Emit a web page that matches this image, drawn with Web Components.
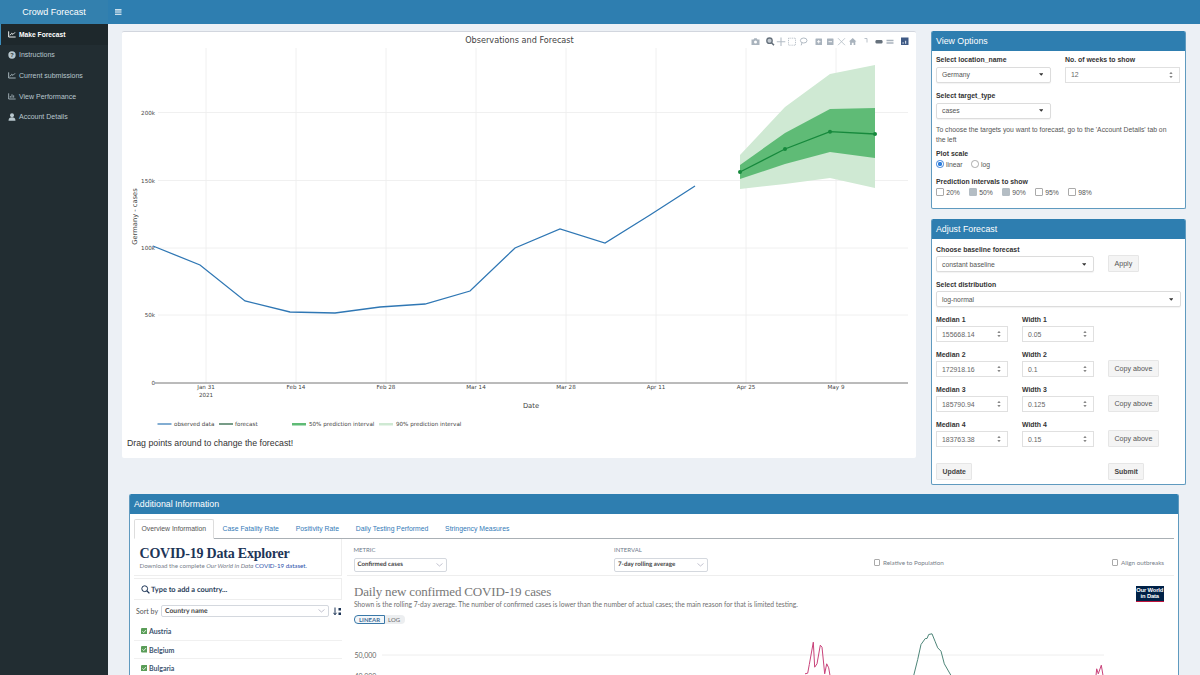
<!DOCTYPE html>
<html lang="en"><head><meta charset="utf-8"><title>Crowd Forecast</title>
<style>
html,body{margin:0;height:675px;overflow:hidden;background:#ecf0f5;font-family:"Liberation Sans",Arial,sans-serif;color:#333}
</style></head><body>
<cf-app></cf-app>
<script>
function el(name, html, css){
  customElements.define(name, class extends HTMLElement{
    constructor(){super();const r=this.attachShadow({mode:'open'});r.innerHTML='<style>'+css+'</style>'+html;}
  });
}
const caret='<svg width="4.500" height="3" viewBox="0 0 7 4"><path d="M0 0h7L3.500 4z" fill="#333"/></svg>';
const spin='<svg width="4" height="8" viewBox="0 0 6 12"><path d="M3 1 5.500 4.500H.5zM3 11 .5 7.500h5z" fill="#888"/></svg>';

el('cf-nav-item',`<slot name="icon"></slot><span><slot></slot></span>`,
`:host{display:flex;align-items:center;height:20.600px;padding-left:7px;gap:3px;font-size:7px;color:#b8c7ce;border-left:1px solid transparent}
:host([active]){background:#1e282c;color:#fff;font-weight:700;border-left-color:#3c8dbc;font-size:6.700px}
::slotted(svg){width:8px;height:8px;flex:none}`);

el('cf-header',`<div class="logo">Crowd Forecast</div><div class="bar"><svg width="6.500" height="6" viewBox="0 0 8 7" fill="#fff"><path d="M0 0h8v1.500H0zM0 2.750h8v1.500H0zM0 5.500h8V7H0z"/></svg></div>`,
`:host{display:flex;height:24px;flex:none}
.logo{width:108px;background:#3380ae;color:#fff;font-size:9px;display:flex;align-items:center;justify-content:center}
.bar{flex:1;background:#2e7eb0;display:flex;align-items:center;padding-left:7px}`);

el('cf-sidebar',`<nav>
<cf-nav-item active><svg slot="icon" viewBox="0 0 12 12" fill="none" stroke="#fff" stroke-width="1.400"><path d="M1 2v8.500h10.500M3 8l2.500-3 2 1.500L10.500 3.500"/></svg>Make Forecast</cf-nav-item>
<cf-nav-item><svg slot="icon" viewBox="0 0 12 12"><circle cx="6" cy="6" r="5.500" fill="#b8c7ce"/><text x="6" y="9" font-size="8.500" font-weight="700" text-anchor="middle" fill="#222d32" font-family="Liberation Sans">?</text></svg>Instructions</cf-nav-item>
<cf-nav-item><svg slot="icon" viewBox="0 0 12 12" fill="none" stroke="#b8c7ce" stroke-width="1.300"><path d="M1 2v8.500h10.500M3 8l2.500-3 2 1.500L10.500 3.500"/></svg>Current submissions</cf-nav-item>
<cf-nav-item><svg slot="icon" viewBox="0 0 12 12" fill="none" stroke="#b8c7ce" stroke-width="1.200"><path d="M1 2v8.500h10.500M3.500 8.500V6M6 8.500V3.500M8.500 8.500V5"/></svg>View Performance</cf-nav-item>
<cf-nav-item><svg slot="icon" viewBox="0 0 12 12" fill="#b8c7ce"><circle cx="6" cy="3.500" r="3"/><path d="M.8 11.500c0-3.800 2.200-5 5.200-5s5.200 1.200 5.200 5z"/></svg>Account Details</cf-nav-item>
</nav>`,`:host{display:block;width:108px;flex:none;background:#222d32}
nav{display:flex;flex-direction:column}`);

el('cf-box',`<header><slot name="title"></slot></header><div class="b"><slot></slot></div>`,
`:host{display:block;background:#fff;border:1px solid #5f9abf;border-top-width:0;border-radius:2px;box-sizing:border-box;overflow:hidden}
header{background:#2e7eb0;color:#fff;font-size:8.800px;height:19.500px;display:flex;align-items:center;margin:0 -1px;padding-left:5px}
.b{padding:5px 4px 0}`);

el('cf-select',`<span><slot></slot></span>${caret}`,
`:host{display:flex;align-items:center;justify-content:space-between;box-sizing:border-box;height:16px;padding:0 7px 0 5px;border:1px solid #dcdcdc;border-radius:2px;font-size:6.800px;color:#555;background:#fff;box-shadow:0 1px 1px rgba(0,0,0,.05)}`);

el('cf-num',`<span><slot></slot></span>${spin}`,
`:host{display:flex;align-items:center;justify-content:space-between;box-sizing:border-box;height:16px;padding:0 6px 0 5px;border:1px solid #e0e0e0;font-size:6.900px;color:#666;background:#fff}`);

el('cf-btn',`<slot></slot>`,
`:host{display:inline-flex;align-items:center;justify-content:center;box-sizing:border-box;height:17px;padding:0 5.500px;background:#f4f4f4;border:1px solid #e6e6e6;font-size:7.100px;color:#555;border-radius:1px;white-space:nowrap}
:host([b]){font-weight:700;color:#444;font-size:6.900px}`);

el('cf-field',`<label><slot name="label"></slot></label><slot></slot>`,
`:host{display:flex;flex-direction:column;gap:2.500px;min-width:0}
label{font-size:6.900px;font-weight:700;color:#333;line-height:9px;white-space:nowrap}`);

el('cf-check',`<i></i><span><slot></slot></span>`,
`:host{display:inline-flex;align-items:center;gap:2.700px;font-size:6.800px;color:#555;width:33px}
i{width:5.500px;height:5.500px;border:.5px solid #aaa;border-radius:1px;background:#fff;display:block;flex:none}
:host([on]) i{background:#b4bdc4;border-color:#b4bdc4}`);

el('cf-radio',`<i></i><span><slot></slot></span>`,
`:host{display:inline-flex;align-items:center;gap:2.500px;font-size:6.800px;color:#555;width:35px}
i{width:5.500px;height:5.500px;border:.5px solid #aaa;border-radius:50%;background:#fff;display:block;flex:none}
:host([on]) i{border:.5px solid #3a80d8;background:radial-gradient(circle,#2f7fdc 0 1.900px,#fff 2.400px)}`);

el('cf-view-options',`<cf-box><span slot="title">View Options</span>
<div class="v">
 <div class="two"><cf-field><span slot="label">Select location_name</span><cf-select>Germany</cf-select></cf-field>
 <cf-field><span slot="label">No. of weeks to show</span><cf-num>12</cf-num></cf-field></div>
 <cf-field class="half"><span slot="label">Select target_type</span><cf-select>cases</cf-select></cf-field>
 <div class="note">To choose the targets you want to forecast, go to the 'Account Details' tab on the left</div>
 <div class="grp g1"><b>Plot scale</b><div class="r"><cf-radio on>linear</cf-radio><cf-radio>log</cf-radio></div></div>
 <div class="grp g2"><b>Prediction intervals to show</b><div class="r"><cf-check>20%</cf-check><cf-check on>50%</cf-check><cf-check on>90%</cf-check><cf-check>95%</cf-check><cf-check>98%</cf-check></div></div>
</div></cf-box>`,
`:host{display:block}
cf-box{height:178px}
.v{display:flex;flex-direction:column;margin-top:-.5px}
.two{display:grid;grid-template-columns:115px 115px;column-gap:14px}
.half{width:115px;margin-top:8.500px}
.note{font-size:6.800px;line-height:9.500px;color:#555;margin-top:6.500px;max-width:240px}
.grp{display:flex;flex-direction:column;gap:1.500px;font-size:6.900px;line-height:9px}
.g1{margin-top:4.500px}.g2{margin-top:7.500px}
.r{display:flex;align-items:center;height:10px}`);

const rows=[['155668.14','0.05',0],['172918.16','0.1',1],['185790.94','0.125',1],['183763.38','0.15',1]];
el('cf-adjust',`<cf-box><span slot="title">Adjust Forecast</span>
<div class="v">
 <div class="a"><cf-field style="width:158px"><span slot="label">Choose baseline forecast</span><cf-select>constant baseline</cf-select></cf-field><cf-btn>Apply</cf-btn></div>
 <cf-field><span slot="label">Select distribution</span><cf-select>log-normal</cf-select></cf-field>
 ${rows.map((r,i)=>`<div class="g"><cf-field><span slot="label">Median ${i+1}</span><cf-num>${r[0]}</cf-num></cf-field><cf-field><span slot="label">Width ${i+1}</span><cf-num>${r[1]}</cf-num></cf-field>${r[2]?'<cf-btn>Copy above</cf-btn>':'<span></span>'}</div>`).join('')}
 <div class="u"><cf-btn b>Update</cf-btn><cf-btn b>Submit</cf-btn></div>
</div></cf-box>`,
`:host{display:block}
cf-box{height:266px}
.v{display:flex;flex-direction:column;gap:7.400px;padding-top:1px}
.a{display:flex;gap:14px;align-items:flex-end;margin-bottom:.6px}
.g{display:grid;grid-template-columns:72px 72px auto;column-gap:14px;align-items:end;justify-items:start}
.g cf-field{width:100%}
.u{display:grid;grid-template-columns:172px auto;margin-top:8.500px;justify-items:start}`);

const obs='153,246 200,265 245,301 290,312 335,313 380,307 425,304 470,291 515,248 560,229 605,243 650,215 695,186';
const vg=[206,296,386,476,566,656,746,836], hg=[[315,'50k'],[248,'100k'],[180.5,'150k'],[112.5,'200k']];
const dates=[[206,'Jan 31'],[296,'Feb 14'],[386,'Feb 28'],[476,'Mar 14'],[566,'Mar 28'],[656,'Apr 11'],[746,'Apr 25'],[836,'May 9']];
const mb=`<g fill="#a9b3bd" stroke="none">
<path d="M751.500 39.500h2l.8-1.300h2.400l.8 1.300h2v5.500h-8z"/><circle cx="755.500" cy="42" r="1.500" fill="#fff"/>
<circle cx="769.500" cy="40.700" r="2.700" fill="#c4cbd2" stroke="#66717c" stroke-width="1.300"/><path d="m771.500 42.800 2.500 2.500" stroke="#66717c" stroke-width="1.600"/>
<path d="M781 37.500v8.500M776.800 41.700h8.500" stroke="#b3bcc5" stroke-width="1.100"/>
<rect x="788.500" y="38.200" width="7" height="7" fill="none" stroke="#a9b3bd" stroke-width=".8" stroke-dasharray="1 .8"/>
<ellipse cx="803.700" cy="40.500" rx="3.300" ry="2.500" fill="none" stroke="#a9b3bd" stroke-width=".9"/><path d="m802 42.800-.8 2.500" stroke="#a9b3bd" stroke-width=".9"/>
<rect x="815.500" y="38.500" width="6.500" height="6.500" rx=".5"/><path d="M817 41.700h3.500M818.700 40v3.400" stroke="#fff" stroke-width=".9"/>
<rect x="827" y="38.500" width="6.500" height="6.500" rx=".5"/><path d="M828.500 41.700h3.500" stroke="#fff" stroke-width=".9"/>
<path d="m838 38.200 7 7M845 38.200l-7 7" stroke="#b3bcc5" stroke-width=".8"/>
<path d="m852.700 38 3.700 3.400h-1.100v3.600h-1.700v-2.300h-1.800V45h-1.700v-3.600h-1.100z"/>
<path d="M864.500 38.500h2.500v4" fill="none" stroke="#a9b3bd" stroke-width=".8"/>
<rect x="875.500" y="40" width="7" height="3.500" rx="1.200" fill="#66717c"/>
<path d="M886.500 39.800h7v1.500h-7zM886.500 42.300h7v1.500h-7z"/>
<rect x="901" y="37.500" width="7.500" height="7.500" fill="#3f5a85"/><path d="M902.500 43.700v-1.500h1.200v1.500zM905 43.700V40.700h1.200v3z" fill="#cdd8e6"/>
</g>`;
el('cf-plot',`<svg width="794" height="400" viewBox="122 31 794 400" font-family="DejaVu Sans,sans-serif">
 <text x="519.500" y="42.500" font-size="8.150" text-anchor="middle" fill="#444">Observations and Forecast</text>
 ${mb}
 <g stroke="#ececec" stroke-width=".8">${vg.map(x=>`<path d="M${x} 48V383"/>`).join('')}${hg.map(h=>`<path d="M158 ${h[0]}H908"/>`).join('')}</g>
 <path d="M155 383H908" stroke="#777" stroke-width="1"/>
 <polygon points="740,155 785,107 830,74 875,65 875,188 830,178 785,184 740,189" fill="#cfe9d3"/>
 <polygon points="740,165 785,133 830,109 875,108 875,158 830,152 785,164 740,179" fill="#5fbb76"/>
 <polyline points="740,172 785,149 830,131.700 875,134" fill="none" stroke="#16893c" stroke-width="1.300"/>
 <g fill="#16893c"><circle cx="740" cy="172" r="2"/><circle cx="785" cy="149" r="2"/><circle cx="830" cy="131.700" r="2"/><circle cx="875" cy="134" r="2"/></g>
 <polyline points="${obs}" fill="none" stroke="#2f77b4" stroke-width="1.300"/>
 <g font-size="5.600" fill="#444">
  ${hg.map(h=>`<text x="155" y="${h[0]+2}" text-anchor="end">${h[1]}</text>`).join('')}
  <text x="155" y="385" text-anchor="end">0</text>
  ${dates.map(d=>`<text x="${d[0]}" y="389.300" text-anchor="middle">${d[1]}</text>`).join('')}
  <text x="206" y="397" text-anchor="middle">2021</text>
  <text x="174" y="426">observed data</text><text x="235" y="426">forecast</text>
  <text x="309" y="426">50% prediction interval</text><text x="396" y="426">90% prediction interval</text>
 </g>
 <text x="531" y="407.500" font-size="6.800" text-anchor="middle" fill="#444">Date</text>
 <text transform="translate(137 216.500) rotate(-90)" font-size="6.700" text-anchor="middle" fill="#444">Germany - cases</text>
 <g stroke-width="1.200" fill="none"><path d="M157.500 424h14" stroke="#2f77b4"/><path d="M219 424h14" stroke="#1d5a37"/></g>
 <rect x="292" y="423" width="14" height="2.500" fill="#5fbb76"/><rect x="379" y="423" width="14" height="2.500" fill="#cfe9d3"/>
</svg><p>Drag points around to change the forecast!</p>`,
`:host{display:block;width:794px;height:427px;background:#fff;box-sizing:border-box;border-top:1px solid #d2d6de;border-radius:2px;overflow:hidden;flex:none}
svg{display:block;margin-top:-1px}
p{margin:6px 0 0 5px;font-size:8.770px;line-height:12px;color:#333}`);

el('cf-tabs',`<a class="on">Overview Information</a><a>Case Fatality Rate</a><a>Positivity Rate</a><a>Daily Testing Performed</a><a>Stringency Measures</a>`,
`:host{display:flex;height:20.500px;box-sizing:border-box;border-bottom:1px solid #aab0b5;font-size:6.850px;color:#337ab7;align-items:stretch}
a{display:flex;align-items:center;padding:0 8.400px;white-space:nowrap}
.on{color:#555;background:#fff;border:1px solid #ddd;border-bottom:1px solid #fff;margin-bottom:-1px;border-radius:2px 2px 0 0;padding:0 7px 0 6.500px;box-sizing:border-box}`);

const ck='<svg width="6.500" height="6.500" viewBox="0 0 7 7"><rect width="7" height="7" rx="1.200" fill="#5a9d58"/><path d="m1.600 3.600 1.300 1.400 2.500-2.800" fill="none" stroke="#e8f3e6" stroke-width="1"/></svg>';
const chev='<svg width="7" height="4" viewBox="0 0 7 4"><path d="m.5.500 3 2.500 3-2.500" fill="none" stroke="#aab" stroke-width=".7"/></svg>';
el('cf-owid-select',`<span><slot></slot></span>${chev}`,
`:host{display:flex;align-items:center;justify-content:space-between;box-sizing:border-box;height:14px;padding:0 3px;border:1px solid #d4d8de;border-radius:2px;font:700 6.200px Lato,sans-serif;color:#444;background:#fff;text-rendering:geometricPrecision}`);

const pink='M804 674.300 806.700 673.700 808.300 665 812.300 642.700 813.700 667.700 816 664.300 819.300 645.700 821 647.700 823.700 674.300 825.700 664.300 827.700 668.300 829 676';
const green='M912.700 676 916.700 660 920 645 924.300 639 926 639 927.700 635 931 634.300 934 641.700 936.700 648.300 940 651.700 943.300 664.300 950 676';
const pink2='M1095 676 1095.700 669.300 1097.300 674.300 1100.300 665.700 1102 676';
el('cf-explorer',`
<div class="grid">
 <aside>
  <div class="t"><h1>COVID-19 Data Explorer</h1><p>Download the complete <i>Our World in Data</i> <a>COVID-19 dataset.</a></p></div>
  <div class="search"><svg width="9" height="9" viewBox="0 0 9 9"><circle cx="3.700" cy="3.700" r="2.900" fill="none" stroke="#1d3557" stroke-width="1"/><path d="m5.800 5.800 2.600 2.600" stroke="#1d3557" stroke-width="1.300"/></svg><b>Type to add a country...</b></div>
  <div class="sort"><span>Sort by</span><cf-owid-select>Country name</cf-owid-select><svg width="9" height="9" viewBox="0 0 9 9"><path d="M2 .5v7M.5 5.800 2 7.800l1.500-2" fill="none" stroke="#1d3557" stroke-width="1"/><rect x="5.500" y="1" width="2.500" height="2.500" fill="#1d3557"/><rect x="5.500" y="5.500" width="2.500" height="2.500" fill="#1d3557"/></svg></div>
  <div class="c">${ck}<b>Austria</b></div><div class="c">${ck}<b>Belgium</b></div><div class="c">${ck}<b>Bulgaria</b></div>
 </aside>
 <section>
  <div class="ctl">
   <div class="m"><small>METRIC</small><cf-owid-select>Confirmed cases</cf-owid-select></div>
   <div class="m"><small>INTERVAL</small><cf-owid-select>7-day rolling average</cf-owid-select></div>
   <label><i></i>Relative to Population</label>
   <label><i></i>Align outbreaks</label>
  </div>
  <div class="head">
   <div><h2>Daily new confirmed COVID-19 cases</h2><p>Shown is the rolling 7-day average. The number of confirmed cases is lower than the number of actual cases; the main reason for that is limited testing.</p>
   <div class="scale"><b>LINEAR</b><span>LOG</span></div></div>
   <div class="logo">Our World<br>in Data</div>
  </div>
  <div class="plot"><span class="y y1">50,000</span><span class="y y2">40,000</span>
  <svg width="830" height="50" viewBox="350 626.500 830 50"><path d="M381 655.500H1103" stroke="#eee" stroke-width="1"/><path d="${pink}" fill="none" stroke="#c9437a" stroke-width="1"/><path d="${green}" fill="none" stroke="#4d8578" stroke-width="1"/><path d="${pink2}" fill="none" stroke="#c9437a" stroke-width="1"/></svg></div>
 </section>
</div>`,
`:host{display:block;font-family:Lato,sans-serif;height:136px;overflow:hidden}
.grid{display:grid;grid-template-columns:208px 1fr;column-gap:4.500px}
aside{display:flex;flex-direction:column;min-width:0}
.t{height:37px;box-sizing:border-box;padding:6.500px 5.500px 0;border-right:1px solid #eee;border-bottom:1px solid #eee}
h1{margin:0;font:700 14px/15px "Liberation Serif",serif;color:#1d3557;letter-spacing:-.2px;white-space:nowrap}
.t p{margin:1px 0 0;font-size:6.200px;color:#78808a;line-height:8px;white-space:nowrap}
.t a{color:#2b50aa}
.search{display:flex;align-items:center;gap:1.500px;height:22px;box-sizing:border-box;margin-top:2px;padding-left:6.500px;font-size:7.400px;color:#2b3f5c;border-top:1px solid #eee;border-bottom:1px solid #eee;border-right:1px solid #eee;text-rendering:geometricPrecision}
.sort{display:flex;align-items:center;height:22px;padding-left:2px;font-size:7px;color:#555;gap:4px}
.sort span{white-space:nowrap;flex:none;width:21px}
.sort cf-owid-select{width:168px;height:12px;font-size:6.800px;flex:none}
.sort svg{flex:none}
.c{display:flex;align-items:center;gap:2px;height:18.700px;box-sizing:border-box;padding-left:6.500px;font-size:7px;color:#3d5470;border-bottom:1px solid #f0f0f0}
section{min-width:0}
.ctl{display:grid;grid-template-columns:260.500px 259.500px 238px auto;height:36.500px;box-sizing:border-box;padding:6.500px 0 0 7px;border-bottom:1px solid #eee;align-items:start;font-size:6.300px;color:#78808a}
small{font-size:6px;color:#6e7a8a;display:block;line-height:8px;margin-bottom:4px}
.m cf-owid-select{width:93.500px}
label{display:flex;align-items:center;gap:3px;padding-top:13.500px;font-size:6.300px;color:#78808a;white-space:nowrap}
label i{display:block;width:4.500px;height:4.500px;border:.6px solid #aaa;border-radius:1px;flex:none}
.head{display:flex;justify-content:space-between;height:50px;box-sizing:border-box;padding:8px 10px 0 7.500px;position:relative}
h2{margin:0;font:400 13px/15px "Liberation Serif",serif;color:#777;letter-spacing:-.17px;white-space:nowrap}
.head p{margin:1px 0 0;font-size:6.750px;line-height:8px;color:#6f6f6f;white-space:nowrap}
.scale{display:flex;margin-top:7px;font-size:6px;height:9px;align-items:stretch}
.scale b{display:flex;align-items:center;padding:0 4px;border:1px solid #3a78a8;border-radius:4px 0 0 4px;color:#3f6e96;background:#f3f7fa}
.scale span{display:flex;align-items:center;padding:0 5px 0 3px;background:#eceef0;border-radius:0 4px 4px 0;color:#666}
.logo{position:absolute;right:10px;top:10.500px;width:28.500px;height:14px;background:#002147;border-bottom:1.500px solid #c0143c;color:#fff;font:700 5.800px/6.400px "Liberation Sans",sans-serif;text-align:center;padding-top:1px;white-space:nowrap;letter-spacing:-.15px}
.plot{position:relative;height:50px}
.y{position:absolute;left:8px;font-size:7px;line-height:9px;color:#666}
.y1{top:25.500px}.y2{top:46px}
.plot svg{position:absolute;left:4px;top:0}`);

el('cf-additional',`<cf-box><span slot="title">Additional Information</span><cf-tabs></cf-tabs><cf-explorer></cf-explorer></cf-box>`,
`:host{display:block;margin-left:7px;width:1050px}
cf-box{height:200px}`);

el('cf-app',`<cf-header></cf-header><div class="main"><cf-sidebar></cf-sidebar>
<div class="content"><div class="top"><cf-plot></cf-plot><div class="side"><cf-view-options></cf-view-options><cf-adjust></cf-adjust></div></div><cf-additional></cf-additional></div></div>`,
`:host{display:flex;flex-direction:column;height:675px;overflow:hidden}
.main{display:flex;flex:1;min-height:0}
.content{flex:1;padding:7px 0 0 14px;min-width:0;overflow:hidden}
.top{display:flex;gap:15px;align-items:flex-start}
.side{width:255px;display:flex;flex-direction:column;gap:10px;flex:none}
cf-additional{margin-top:9px}`);
</script></body></html>
